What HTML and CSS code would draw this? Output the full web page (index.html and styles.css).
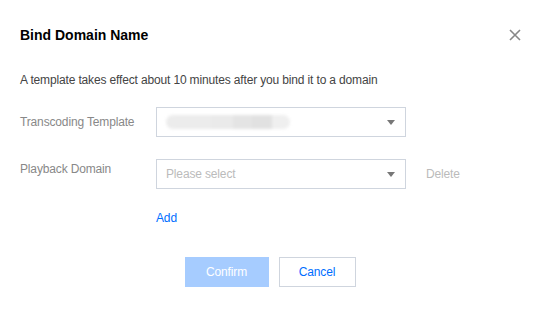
FILE: index.html
```html
<!DOCTYPE html>
<html>
<head>
<meta charset="utf-8">
<link rel="stylesheet" href="styles.css">
</head>
<body>
<div class="dialog">
  <div class="header">
    <h2 class="title">Bind Domain Name</h2>
    <button class="close" aria-label="Close">
      <svg width="12" height="12" viewBox="0 0 12 12"><path d="M1 1L11 11M11 1L1 11" stroke="#888" stroke-width="1.6" fill="none"/></svg>
    </button>
  </div>
  <p class="desc">A template takes effect about 10 minutes after you bind it to a domain</p>
  <div class="form">
    <div class="row">
      <label class="label">Transcoding Template</label>
      <div class="select">
        <span class="blur">
          <span class="b1"></span><span class="b2"></span><span class="b3"></span><span class="b4"></span><span class="b5"></span>
        </span>
        <span class="caret"></span>
      </div>
    </div>
    <div class="row row2">
      <label class="label label-top">Playback Domain</label>
      <div class="select">
        <span class="placeholder">Please select</span>
        <span class="caret"></span>
      </div>
      <span class="delete">Delete</span>
    </div>
    <div class="row-add">
      <a class="add">Add</a>
    </div>
  </div>
  <div class="footer">
    <button class="btn btn-primary">Confirm</button>
    <button class="btn btn-default">Cancel</button>
  </div>
</div>
</body>
</html>
```
FILE: styles.css
```css
* { box-sizing: border-box; }
html, body { margin: 0; padding: 0; background: #fff; }
body { font-family: "Segoe UI", "Liberation Sans", Arial, sans-serif; font-size: 12px; color: #444; letter-spacing: -0.15px; }
.dialog { width: 544px; height: 309px; padding: 0 20px; }
.header { display: flex; justify-content: space-between; align-items: center; padding-top: 26px; height: 44px; }
.title { margin: 0; font-size: 14px; font-weight: bold; color: #000; line-height: 18px; letter-spacing: 0; }
.close { border: 0; background: none; padding: 0; margin-right: 3px; width: 12px; height: 12px; display: flex; }
.desc { margin: 28px 0 0; line-height: 16px; color: #444; }
.form { margin-top: 19px; }
.row { display: flex; align-items: center; }
.row2 { margin-top: 22px; align-items: flex-start; }
.label { width: 136px; color: #888; line-height: 30px; }
.label-top { line-height: 20px; }
.select { width: 250px; height: 30px; border: 1px solid #cfd5de; display: flex; align-items: center; padding: 0 10px 0 9px; position: relative; }
.caret { margin-left: auto; width: 0; height: 0; border-left: 4px solid transparent; border-right: 4px solid transparent; border-top: 5px solid #777; }
.placeholder { color: #bbb; }
.blur { display: flex; height: 14px; filter: blur(1.5px); }
.blur span { height: 14px; display: block; }
.b1 { width: 45px; background: #ececec; border-radius: 7px 0 0 7px; }
.b2 { width: 22px; background: #eaeaea; }
.b3 { width: 19px; background: #e4e4e4; }
.b4 { width: 20px; background: #e1e1e1; }
.b5 { width: 18px; background: #efefef; border-radius: 0 7px 7px 0; }
.delete { color: #bbb; margin-left: 20px; line-height: 30px; }
.row-add { padding-left: 136px; margin-top: 19px; }
.add { color: #006eff; line-height: 20px; }
.footer { display: flex; justify-content: center; gap: 10px; margin-top: 29px; padding-right: 4px; }
.btn { height: 30px; font-family: inherit; font-size: 12px; padding: 0; letter-spacing: -0.15px; }
.btn-primary { width: 84px; background: #a6ccff; color: #fff; border: 0; }
.btn-default { width: 77px; background: #fff; color: #006eff; border: 1px solid #cfd5de; }
```
